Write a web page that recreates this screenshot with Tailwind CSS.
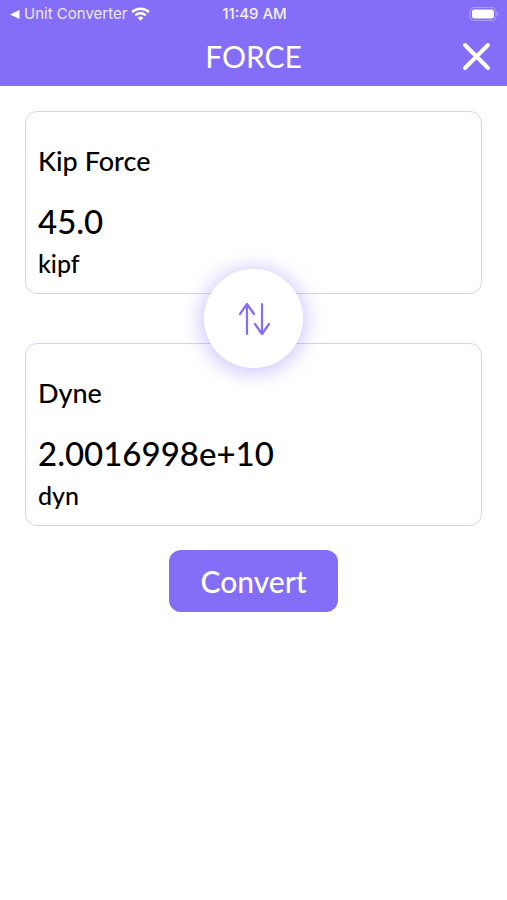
<!DOCTYPE html>
<html lang="en">
<head>
<meta charset="utf-8">
<meta name="viewport" content="width=device-width, initial-scale=1">
<title>Force</title>
<script src="https://cdn.jsdelivr.net/npm/@tailwindcss/browser@4"></script>
</head>
<body class="min-h-screen bg-white font-['Lato',sans-serif] font-medium text-black">
<header class="bg-[#846df7] text-white">
  <div class="grid h-7 grid-cols-3 items-center pl-[10px] pr-2 font-['Inter',sans-serif] text-[15px] leading-7">
    <a href="#" class="flex items-center gap-1 whitespace-nowrap font-normal text-white/85">
      <svg class="h-[9px] w-[10px] shrink-0" viewBox="0 0 10 9" fill="white" aria-hidden="true"><path d="M0 4.500 9.500 0v9z"/></svg>
      <span>Unit Converter</span>
      <svg class="h-[14px] w-[19px] shrink-0" viewBox="0 0 19 14" fill="none" stroke="white" stroke-width="2.400" aria-hidden="true"><path d="M1 5.200a12.300 12.300 0 0 1 17 0M4.200 8.400a7.800 7.800 0 0 1 10.600 0"/><path d="M9.500 13.800 6.600 10.800a4.300 4.300 0 0 1 5.800 0z" fill="white" stroke="none"/></svg>
    </a>
    <span class="text-center font-medium text-white/90">11:49 AM</span>
    <svg class="h-[14px] w-[30px] justify-self-end" viewBox="0 0 30 14" aria-hidden="true"><rect x="1" y=".5" width="26" height="13" rx="4" fill="none" stroke="white" stroke-opacity=".35"/><rect x="3" y="2.500" width="22" height="9" rx="2.500" fill="white"/><path d="M28 4.800q2 2.200 0 4.400z" fill="white" fill-opacity=".5"/></svg>
  </div>
  <div class="grid h-[58px] grid-cols-[1fr_auto_1fr] items-center px-4 pb-[3px]">
    <h1 class="col-start-2 text-[30px] leading-9 font-normal">FORCE</h1>
    <button type="button" aria-label="Close" class="justify-self-end">
      <svg class="h-7 w-7" viewBox="0 0 28 28" fill="none" stroke="white" stroke-width="4" stroke-linecap="round"><path d="M2 3 25 26M25 3 2 26"/></svg>
    </button>
  </div>
</header>
<main class="px-[25px] pt-[25px]">
  <form class="flex flex-col items-center">
    <section class="flex h-[183px] w-full flex-col rounded-xl border border-[#d6cffc] px-3 pt-[31px]">
      <label for="amount" class="text-[27px] leading-9">Kip Force</label>
      <input id="amount" type="text" inputmode="decimal" value="45.0" class="mt-5 h-11 w-full bg-transparent text-[33px] leading-[44px] outline-none">
      <span class="mt-[2px] text-[25px] leading-9">kipf</span>
    </section>
    <button type="button" aria-label="Swap units" class="relative z-10 -my-[25px] flex size-[99px] items-center justify-center rounded-full bg-white shadow-[0_2px_20px_3px_#846df766]">
      <svg class="h-9 w-9" viewBox="0 0 36 36" fill="none" stroke="#846df7" stroke-width="2.200" stroke-linecap="round" stroke-linejoin="round"><path d="M11 33V3M4 13 11 3l7 10M26 3v30M19 23l7 10 7-10"/></svg>
    </button>
    <section class="flex h-[183px] w-full flex-col rounded-xl border border-[#d6cffc] px-3 pt-[31px]">
      <label for="result" class="text-[27px] leading-9">Dyne</label>
      <output id="result" for="amount" class="mt-5 h-11 text-[33px] leading-[44px]">2.0016998e+10</output>
      <span class="mt-[2px] text-[25px] leading-9">dyn</span>
    </section>
    <button type="button" class="mt-6 h-[62px] w-[169px] rounded-xl bg-[#846df7] text-[30px] leading-9 text-white">Convert</button>
  </form>
</main>
</body>
</html>
